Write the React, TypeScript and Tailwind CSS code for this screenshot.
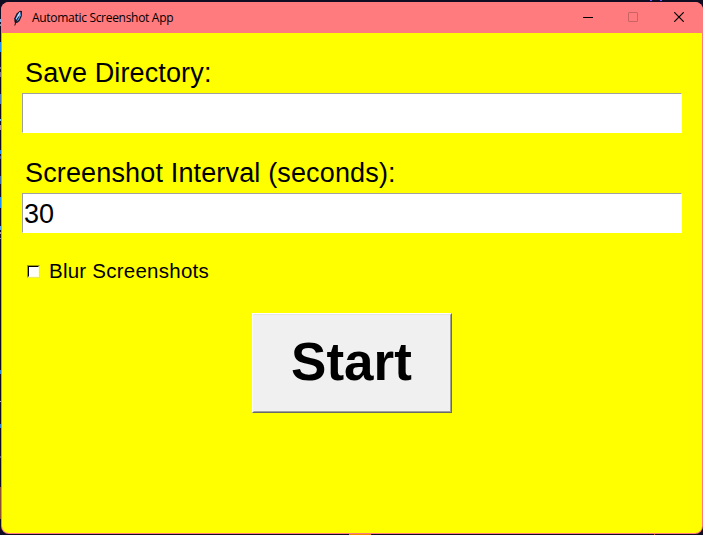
const DESKTOP_STRIPS: { top: number; height: number; color: string }[] = [
  { top: 19, height: 3, color: '#7fb4e8' },
  { top: 24, height: 2, color: '#8d8fa0' },
  { top: 42, height: 10, color: '#1e90ff' },
  { top: 67, height: 2, color: '#70708a' },
  { top: 72, height: 5, color: '#77708c' },
  { top: 94, height: 10, color: '#4a78b8' },
  { top: 119, height: 2, color: '#6fb6ff' },
  { top: 125, height: 5, color: '#a89098' },
  { top: 150, height: 4, color: '#1e80e8' },
  { top: 156, height: 3, color: '#40589a' },
  { top: 176, height: 8, color: '#3a68a8' },
  { top: 197, height: 11, color: '#1e90ff' },
  { top: 226, height: 4, color: '#4fa6ff' },
  { top: 232, height: 2, color: '#a89098' },
  { top: 238, height: 1, color: '#8888a0' },
  { top: 370, height: 4, color: '#2a80d8' },
  { top: 401, height: 1, color: '#b0b0c0' },
  { top: 424, height: 4, color: '#2a80d8' },
  { top: 456, height: 2, color: '#505070' },
  { top: 487, height: 32, color: '#8a5030' },
];

function TitleBar() {
  return (
    <header className="flex h-[31px] shrink-0 items-center bg-[#ff7b7d] text-black">
      <svg className="ml-[11px] h-4 w-3" viewBox="0 0 12 16">
        <path d="M8 .8 10 1 9.8 6 7.6 11 5 13 2.6 12.4 2.2 8.5 4.6 3.6Z" fill="#10162c" />
        <path d="M8.3 1.8 8.9 5.3 6.9 9.8 4.6 11.8 3.6 8.5 5.6 4.4Z" fill="#5b9fe8" />
        <path d="M7.8 2.4 6.4 5.6 4.6 9" stroke="#d8ecff" strokeWidth="1.1" fill="none" />
        <path d="M6.8 6.5 3.8 12 2.8 15.5" stroke="#111" strokeWidth="1" fill="none" />
      </svg>
      <h1 className="ml-2 grow whitespace-nowrap font-['Open_Sans','Noto_Sans',sans-serif] text-[12px] leading-4 tracking-[-0.3px]">
        Automatic Screenshot App
      </h1>
      <div className="flex">
        <button className="flex h-[31px] w-[45px] items-center justify-center pl-px" aria-label="Minimize">
          <svg className="h-[10px] w-[10px]" viewBox="0 0 10 10">
            <path d="M0 4.5H10" stroke="#000" />
          </svg>
        </button>
        <button className="flex h-[31px] w-[45px] items-center justify-center pb-px pl-px" aria-label="Maximize" disabled>
          <svg className="h-[10px] w-[10px]" viewBox="0 0 10 10">
            <rect x=".5" y=".5" width="9" height="9" rx=".5" fill="none" stroke="#cb6263" />
          </svg>
        </button>
        <button className="flex h-[31px] w-[48px] items-center justify-center pb-px" aria-label="Close">
          <svg className="h-[10px] w-[10px]" viewBox="0 0 10 10">
            <path d="M.3 .3 9.7 9.7M9.7 .3 .3 9.7" stroke="#000" strokeWidth="1.2" />
          </svg>
        </button>
      </div>
    </header>
  );
}

export default function App() {
  return (
    <div className="relative h-[535px] w-[703px] overflow-hidden bg-[#100c22] pl-px pt-[2px] font-['Liberation_Sans',Arial,sans-serif] text-black">
      {DESKTOP_STRIPS.map((s) => (
        <div
          key={s.top}
          className="absolute left-0 w-px"
          style={{ top: s.top, height: s.height, backgroundColor: s.color }}
        />
      ))}
      <div className="absolute left-[650px] top-0 h-px w-[2px] bg-[#7b4dff]" />
      <div className="absolute left-[660px] top-0 h-px w-[2px] bg-[#7b4dff]" />
      <div className="absolute bottom-0 left-[349px] h-px w-[22px] bg-[#ee8800]" />
      <div className="absolute bottom-0 left-[654px] h-px w-px bg-[#c06010]" />

      <div className="relative flex h-[532px] w-[702px] flex-col overflow-hidden rounded-lg bg-[#ff7b7d]">
        <TitleBar />
        <main className="mx-px mb-px flex grow flex-col overflow-hidden rounded-b-[7px] bg-[#ffff00] px-5 pt-[20px]">
          <label htmlFor="dir" className="flex h-10 items-center whitespace-nowrap pl-[3px] text-[27px] leading-10 tracking-[0.13px]">
            Save Directory:
          </label>
          <input
            id="dir"
            className="h-10 w-[660px] border border-white border-l-[#a0a0a0] border-t-[#a0a0a0] bg-white px-px text-[27px] outline-none"
          />
          <label htmlFor="interval" className="mt-5 flex h-10 items-center whitespace-nowrap pl-[3px] text-[27px] leading-10 tracking-[0.15px]">
            Screenshot Interval (seconds):
          </label>
          <input
            id="interval"
            defaultValue="30"
            className="h-10 w-[660px] border border-white border-l-[#a0a0a0] border-t-[#a0a0a0] bg-white px-px pt-[2px] text-[27px] outline-none"
          />
          <label className="mt-[23px] flex h-[30px] items-center whitespace-nowrap pl-[5px] text-[20.5px] leading-[30px] tracking-[0.24px]">
            <span className="mr-[9px] h-[13px] w-[13px] border border-[#e8e86a] border-l-[#a0a000] border-t-[#a0a000]">
              <span className="block h-[11px] w-[11px] border border-[#ffffd8] border-l-black border-t-black bg-white" />
            </span>
            Blur Screenshots
          </label>
          <button className="ml-[230px] mt-[27px] h-[100px] w-[200px] border border-[#696969] border-l-white border-t-white bg-[#f0f0f0]">
            <span className="flex h-full w-full items-center justify-center border border-[#a0a0a0] border-l-[#f0f0f0] border-t-[#e3e3e3] pb-[3px] pr-px text-[53px] font-bold leading-none">
              Start
            </span>
          </button>
        </main>
      </div>
    </div>
  );
}
